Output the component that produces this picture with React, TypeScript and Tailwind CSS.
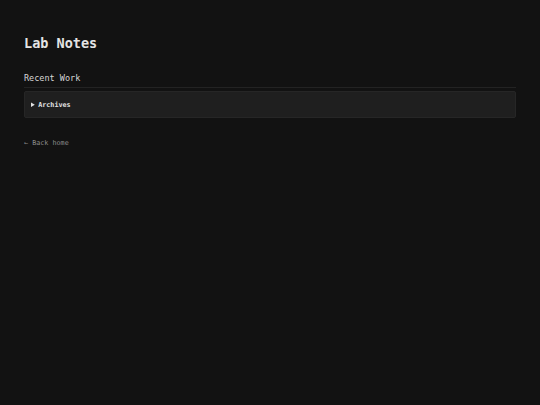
export default function App() {
  return (
    <div className="min-h-screen bg-[#121212] px-[24px] pt-[35px] font-['DejaVu_Sans_Mono',monospace] text-[#e4e4e4]">
      <h1 className="text-[13.5px] leading-[16px] font-bold">Lab Notes</h1>

      <section className="mt-[22px]">
        <h2 className="border-b border-[#232323] pb-[3.5px] text-[8.5px] leading-[10px] text-[#d6d6d6]">
          Recent Work
        </h2>
        <details className="mt-[3.5px] rounded-[2px] border border-[#262626] bg-[#1f1f1f]">
          <summary className="cursor-pointer px-[6px] py-[8.5px] text-[6.75px] leading-[8px] font-bold text-[#e2e2e2]">
            Archives
          </summary>
        </details>
      </section>

      <a href="#" className="mt-[21px] inline-block text-[6.75px] leading-[8px] text-[#8c8c8c]">
        ← Back home
      </a>
    </div>
  );
}
